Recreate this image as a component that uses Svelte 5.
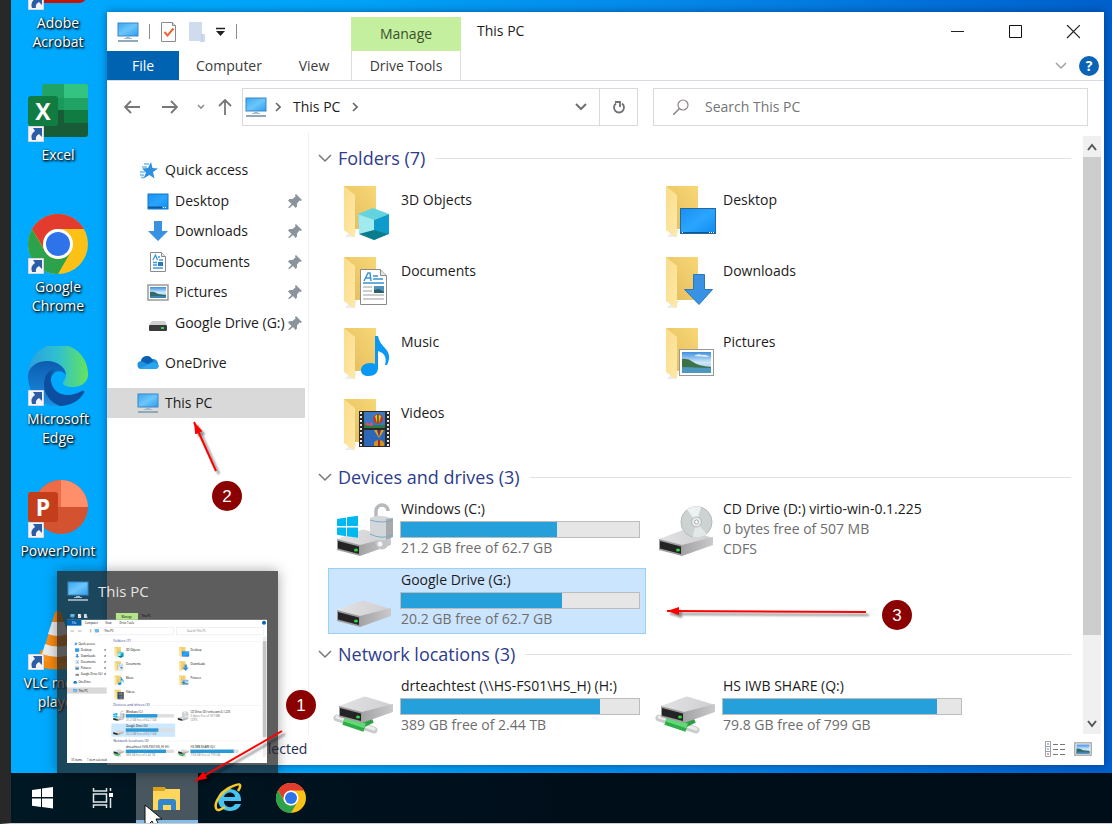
<svelte:head>
	<title>This PC</title>
</svelte:head>

<script>
	let search = '';

	const shortcuts = [
		{ label: 'Adobe Acrobat', icon: 'acrobat' },
		{ label: 'Excel', icon: 'excel', letter: 'X' },
		{ label: 'Google Chrome', icon: 'chrome' },
		{ label: 'Microsoft Edge', icon: 'edge' },
		{ label: 'PowerPoint', icon: 'powerpoint', letter: 'P' },
		{ label: 'VLC media player', icon: 'vlc' }
	];

	const quick = [
		{ label: 'Desktop', icon: 'desktop' },
		{ label: 'Downloads', icon: 'download' },
		{ label: 'Documents', icon: 'document' },
		{ label: 'Pictures', icon: 'picture' },
		{ label: 'Google Drive (G:)', icon: 'smalldrive' }
	];

	// top and line are the heading's place in the thumbnail
	const groups = [
		{
			title: 'Folders (7)',
			top: 126,
			line: 326,
			items: [
				{ name: '3D Objects', icon: 'f-objects' },
				{ name: 'Desktop', icon: 'f-desktop' },
				{ name: 'Documents', icon: 'f-documents' },
				{ name: 'Downloads', icon: 'f-downloads' },
				{ name: 'Music', icon: 'f-music' },
				{ name: 'Pictures', icon: 'f-pictures' },
				{ name: 'Videos', icon: 'f-videos' }
			]
		},
		{
			title: 'Devices and drives (3)',
			top: 445,
			line: 424,
			items: [
				{ name: 'Windows (C:)', icon: 'd-windows', used: 65.5, info: ['21.2 GB free of 62.7 GB'] },
				{ name: 'CD Drive (D:) virtio-win-0.1.225', icon: 'd-cd', info: ['0 bytes free of 507 MB', 'CDFS'] },
				{ name: 'Google Drive (G:)', icon: 'd-drive', used: 67.7, info: ['20.2 GB free of 62.7 GB'], selected: true }
			]
		},
		{
			title: 'Network locations (3)',
			top: 622,
			line: 420,
			items: [
				{ name: 'drteachtest (\\\\HS-FS01\\HS_H) (H:)', icon: 'd-network', used: 83.6, info: ['389 GB free of 2.44 TB'] },
				{ name: 'HS IWB SHARE (Q:)', icon: 'd-network', used: 90, info: ['79.8 GB free of 799 GB'] }
			]
		}
	];

	const taskbar = [
		{ label: 'Start', icon: 'start' },
		{ label: 'Task View', icon: 'taskview' },
		{ label: 'File Explorer', icon: 'explorer', active: true },
		{ label: 'Internet Explorer', icon: 'ie' },
		{ label: 'Google Chrome', icon: 'chrome' }
	];

	// position of a tile inside the thumbnail
	function tileX(i) {
		return 221 + (i % 2) * 322;
	}
	function tileY(top, i) {
		return top + 40 + Math.floor(i / 2) * 71;
	}
</script>

<svg class="sprite" aria-hidden="true">
	<defs>
		<linearGradient id="screen" x1="0" y1="0" x2="1" y2="1">
			<stop offset="0" stop-color="#3aa6f2" /><stop offset=".5" stop-color="#6cc6fb" /><stop offset="1" stop-color="#2f9df0" />
		</linearGradient>
		<linearGradient id="desk" x1="0" y1="0" x2="1" y2="1">
			<stop offset="0" stop-color="#1b8ff0" /><stop offset=".5" stop-color="#2aa5ff" /><stop offset="1" stop-color="#118cf0" />
		</linearGradient>
		<linearGradient id="flap" x1="0" y1="0" x2="1" y2="1">
			<stop offset="0" stop-color="#fbdc88" /><stop offset="1" stop-color="#fde9a9" />
		</linearGradient>
		<linearGradient id="back" x1="0" y1="1" x2="1" y2="0">
			<stop offset="0" stop-color="#e3bb5c" /><stop offset="1" stop-color="#f8d775" />
		</linearGradient>
		<linearGradient id="steel" x1="0" y1="0" x2="1" y2="0">
			<stop offset="0" stop-color="#e2e2e4" /><stop offset="1" stop-color="#cfcfd2" />
		</linearGradient>
		<linearGradient id="side" x1="0" y1="0" x2="1" y2="0">
			<stop offset="0" stop-color="#a3a3a6" /><stop offset="1" stop-color="#cacacd" />
		</linearGradient>
		<linearGradient id="arrowblue" x1="0" y1="0" x2="1" y2="1">
			<stop offset="0" stop-color="#3f90dd" /><stop offset="1" stop-color="#3294e8" />
		</linearGradient>
		<linearGradient id="sky" x1="0" y1="0" x2="0" y2="1">
			<stop offset="0" stop-color="#3f8ee0" /><stop offset=".5" stop-color="#cfe8f8" /><stop offset="1" stop-color="#7db6dc" />
		</linearGradient>
		<linearGradient id="edgetop" x1="0" y1="0" x2="1" y2="0">
			<stop offset="0" stop-color="#2a9fe0" /><stop offset=".5" stop-color="#2fc1cf" /><stop offset="1" stop-color="#66e35a" />
		</linearGradient>
		<linearGradient id="edgeleft" x1="0" y1="0" x2="0" y2="1">
			<stop offset="0" stop-color="#0d5cb0" /><stop offset="1" stop-color="#1c90e2" />
		</linearGradient>
		<linearGradient id="cone" x1="0" y1="0" x2="1" y2="0">
			<stop offset="0" stop-color="#ff9a1f" /><stop offset="1" stop-color="#e96a00" />
		</linearGradient>
	</defs>

	<symbol id="monitor" viewBox="0 0 22 20">
		<rect x="1" y="1" width="20" height="13" fill="url(#screen)" stroke="#3a86c4" />
		<path d="M9 15h4v1h2v1H7v-1h2z" fill="#a5bac9" />
		<rect x="1" y="18" width="20" height="2" fill="#8fa8ba" />
	</symbol>
	<symbol id="desktop" viewBox="0 0 22 20">
		<rect x="1" y="3" width="20" height="15" fill="url(#desk)" stroke="#1577c4" />
		<path d="M1 16.5h14" stroke="#0a5ba5" stroke-width="2" />
		<path d="M16 16.5h1m1 0h1" stroke="#fff" />
	</symbol>
	<symbol id="download" viewBox="0 0 22 20">
		<path d="M7 0h8v10h6L11 20 1 10h6z" fill="url(#arrowblue)" />
	</symbol>
	<symbol id="document" viewBox="0 0 22 20">
		<path d="M3.5.5h11l4 4v15h-15z" fill="#fff" stroke="#8b8b8b" />
		<path d="M14.5.5v4h4" fill="#e7e7e7" stroke="#8b8b8b" />
		<path d="M6 8l2.500-5 2 5M11 5h2M12 8h4M6 10.500h4M6 13h4M6 16h10" stroke="#3a9bdc" fill="none" stroke-width="1.300" />
		<rect x="11" y="10" width="5" height="4" fill="#2c78b8" />
	</symbol>
	<symbol id="picture" viewBox="0 0 22 20">
		<rect x="1" y="3" width="20" height="15" fill="#fff" stroke="#9a9a9a" stroke-width="1.500" />
		<rect x="3" y="5" width="16" height="11" fill="url(#sky)" />
		<path d="M3 10q4-1 8 2l8 1v3H3z" fill="#2f6a6a" />
		<path d="M3 14h16v2H3z" fill="#3f83b5" />
	</symbol>
	<symbol id="smalldrive" viewBox="0 0 22 20">
		<path d="M5 8h13l2 4H2z" fill="#cfcfcf" />
		<rect x="2" y="12" width="18" height="6" rx="1" fill="#3a3a3a" />
		<rect x="14" y="14" width="3" height="2" fill="#35d04a" />
	</symbol>
	<symbol id="star" viewBox="0 0 22 20">
		<path d="M14 2l1.500 6 5.500.5-5 3.500 1.500 6.500-5-3.500-6 3.500 2.500-6L5 8.500 11 8z" fill="#2e8fe0" />
		<path d="M7 4h5M5 7h5M3 12h5M3 15h4M4 17.500h3" stroke="#6db9ee" stroke-width="1.300" />
	</symbol>
	<symbol id="onedrive" viewBox="0 0 22 20">
		<path d="M5 16a4 4 0 0 1-1-8 6 6 0 0 1 11-2 5 5 0 0 1 6 5 3 3 0 0 1-2 5z" fill="#1e90e0" />
		<path d="M4 8a6 6 0 0 1 11-2q1 1 1.500 2L11 11z" fill="#0a5fb4" />
		<path d="M3 15l13-5.500q5 0 5 3a3 3 0 0 1-2 3.500H5z" fill="#2aa6ee" />
	</symbol>
	<symbol id="pin" viewBox="0 0 14 14">
		<path d="M8 0l6 6-1.500 1-1-.5-2.500 3v3L7.500 14 5 11 1.500 14 0 13.500 3.500 10 0 6.500 1.500 5h3l3-2.500L7 1z" fill="#8b949c" />
	</symbol>
	<symbol id="check" viewBox="0 0 18 20">
		<path d="M1.500.5h11l3 3v16h-14z" fill="#fdfdfd" stroke="#8a8a8a" />
		<path d="M12.500.5v3h3" fill="#ddd" stroke="#8a8a8a" />
		<path d="M4.500 10l3 3.500 6-7" fill="none" stroke="#e8663a" stroke-width="2" />
	</symbol>
	<symbol id="blank" viewBox="0 0 18 20">
		<path d="M1 0h13v12h3v8h-5v-1H1z" fill="#cfdcee" />
		<path d="M14 12v8" stroke="#b9cae3" />
	</symbol>

	<symbol id="folder" viewBox="0 0 64 64">
		<path d="M13 59l6-7h6l-3 7z" fill="#ececec" />
		<path d="M12 8h32v43H22z" fill="url(#back)" />
		<path d="M12 8l11 9v42l-3-1-8-6z" fill="url(#flap)" />
	</symbol>
	<symbol id="f-objects" viewBox="0 0 64 64">
		<use href="#folder" />
		<path d="M26 36l15-6 16 6-15 6z" fill="#63d3df" />
		<path d="M26 36l16 6v20l-15-6z" fill="#7fe0ea" />
		<path d="M57 36l-15 6v20l15-6z" fill="#0d9ccb" />
		<path d="M42 42v10l-15 4V37z" fill="#b5f0f4" opacity=".6" />
		<path d="M27 56l15-4 14 4-14 6z" fill="#0b7c8c" />
	</symbol>
	<symbol id="f-desktop" viewBox="0 0 64 64">
		<use href="#folder" />
		<rect x="26.500" y="30.500" width="35" height="25" fill="url(#desk)" stroke="#226a9c" />
		<path d="M27 54.500h34" stroke="#0f5790" />
		<path d="M28 54.500h1M55 54.500h1m1 0h1m1 0h1" stroke="#fff" />
	</symbol>
	<symbol id="f-documents" viewBox="0 0 64 64">
		<use href="#folder" />
		<path d="M28.500 20.500h20l6 6v29h-26z" fill="#fff" stroke="#8a8a8a" />
		<path d="M48.500 20.500v6h6" fill="#e4e4e4" stroke="#8a8a8a" />
		<path d="M32 32l4-8h2l1 8M34 29h4M41 27h5M41 30h10M31 34h21" fill="none" stroke="#3a93d2" stroke-width="1.500" />
		<path d="M31 38h9M31 42h9M31 46h21M31 50h21" stroke="#9b9b9b" />
		<rect x="42" y="37" width="10" height="7" fill="#4f93bd" />
		<path d="M42 41l5-1 5 3v1H42z" fill="#2c5f63" />
	</symbol>
	<symbol id="f-downloads" viewBox="0 0 64 64">
		<use href="#folder" />
		<path d="M39.500 25.500h11v15h8L45 55.500 30.500 40.500h9z" fill="url(#arrowblue)" stroke="#2a79bd" />
	</symbol>
	<symbol id="f-music" viewBox="0 0 64 64">
		<use href="#folder" />
		<path d="M43 16h3q1 6 6 11c5 5 7 10 3 18h-2c2-7 0-12-7-14v17c0 5-4 8-9 8s-8-2-8-6 4-7 9-7q3 0 5 1z" fill="#0a98f5" />
	</symbol>
	<symbol id="f-pictures" viewBox="0 0 64 64">
		<use href="#folder" />
		<rect x="25.500" y="29.500" width="34" height="26" fill="#fff" stroke="#999" />
		<rect x="28" y="32" width="29" height="21" fill="url(#sky)" />
		<path d="M28 39q6-1 11 3t18 5v2H28z" fill="#3d7148" />
		<path d="M28 47l29 1v5H28z" fill="#4e97bf" />
		<path d="M40 36q4-3 8-1 4-1 7 2z" fill="#fff" opacity=".8" />
	</symbol>
	<symbol id="f-videos" viewBox="0 0 64 64">
		<use href="#folder" />
		<rect x="27" y="20" width="31" height="36" fill="#292929" />
		<path d="M29 21v34M56 21v34" stroke="#e9e9e9" stroke-width="2" stroke-dasharray="2 2" />
		<rect x="32" y="21" width="21" height="16" fill="#3a78c4" />
		<rect x="32" y="39" width="21" height="16" fill="#2d67ba" />
		<path d="M32 33q3-2 6 0 4 2 15 1v3H32z" fill="#2d7a42" />
		<circle cx="46" cy="28" r="5" fill="#c9362c" />
		<path d="M43 25q3-3 6 0l-2 7h-2z" fill="#efc326" />
		<path d="M46 23v9" stroke="#2d5a2d" stroke-width="1.500" />
		<path d="M33 34l2-3 2 2 3-2 1 4z" fill="#d8517a" />
		<path d="M42 39h10l-3 5-2 3-2-3z" fill="#d9a51c" />
		<path d="M45 39h4l-2 7z" fill="#6f2b67" />
		<path d="M42 55q-1-6 5-6t5 6z" fill="#d98f1c" />
		<path d="M46 49h2v6h-2z" fill="#9c2c2c" />
	</symbol>

	<symbol id="d-drive" viewBox="0 0 64 64">
		<path d="M5 42l24-9q2-1 4 0l26 8-31 8z" fill="url(#steel)" />
		<path d="M28 48l31-8v8L28 59z" fill="url(#side)" />
		<path d="M5 42l23 6v11L5 53z" fill="#9d9da0" />
		<path d="M6 44l21 5.500v7.500L6 51.500z" fill="#242424" />
		<ellipse cx="24" cy="53" rx="2" ry="1.500" fill="#2fd34a" />
	</symbol>
	<symbol id="d-windows" viewBox="0 0 64 64">
		<use href="#d-drive" />
		<path d="M5 22l9-1.500V29H5zM15 20.300l11-1.600V29H15zM5 30.500h9v8.700l-9-1.400zM15 30.500h11v10.200l-11-1.500z" fill="#00b9f2" />
		<circle cx="50" cy="46" r="6.500" fill="#c2c5c8" />
		<path d="M44 20v-6a6 6 0 0 1 12 0" fill="none" stroke="#b7babd" stroke-width="3.500" />
		<path d="M38 21q10-5 23 1v18q-11 7-23 0z" fill="#d4d7da" />
		<path d="M54 22l7-1v19l-7 3z" fill="#a6a9ae" />
		<path d="M38 23q12 4 23 0M38 37q12 6 23 1" fill="none" stroke="#7aaac8" />
		<circle cx="48" cy="47" r="2.500" fill="#f4f4f4" />
	</symbol>
	<symbol id="d-cd" viewBox="0 0 64 64">
		<use href="#d-drive" />
		<circle cx="42.500" cy="25" r="15.500" fill="#cdd3d3" stroke="#b5baba" />
		<path d="M42.500 25L33 12.500a15.500 15.500 0 0 1 14-2.500z" fill="#eef1f1" />
		<path d="M42.500 25l10 12a15.500 15.500 0 0 1-14 3z" fill="#e3e7e7" />
		<circle cx="42.500" cy="25" r="5" fill="#e8ebeb" stroke="#b3b8b8" />
		<circle cx="42.500" cy="25" r="2" fill="#fff" stroke="#aaa" />
	</symbol>
	<symbol id="d-network" viewBox="0 0 64 64">
		<path d="M5 44L42 56" stroke="#c9cbcc" stroke-width="7" stroke-linecap="round" />
		<path d="M5 43L42 55" stroke="#eceeee" stroke-width="3" stroke-linecap="round" />
		<path d="M30 50l10-5" stroke="#2e9d45" stroke-width="8" />
		<path d="M12 46l21 7" stroke="#2eae48" stroke-width="10" />
		<path d="M12 45l21 7" stroke="#62d874" stroke-width="5" />
		<g transform="translate(2 -10)"><use href="#d-drive" /></g>
	</symbol>

	<symbol id="acrobat" viewBox="0 0 60 60">
		<rect x="1" y="0" width="58" height="53" rx="8" fill="#c41408" />
	</symbol>
	<symbol id="excel" viewBox="0 0 60 60">
		<path d="M17 2h41a2 2 0 0 1 2 2v12H14V5a3 3 0 0 1 3-3z" fill="#21a366" />
		<path d="M36 2h22a2 2 0 0 1 2 2v12H36z" fill="#33c481" />
		<path d="M14 16h46v12H14z" fill="#21a366" />
		<path d="M14 16h22v12H14z" fill="#189a5b" />
		<path d="M14 28h46v13H14z" fill="#107c41" />
		<path d="M14 28h22v13h24v11a3 3 0 0 1-3 3H17a3 3 0 0 1-3-3z" fill="#185c37" />
		<rect x="0" y="14" width="30" height="30" rx="3" fill="#107c41" />
	</symbol>
	<symbol id="chrome" viewBox="0 0 60 60">
		<circle cx="30" cy="30" r="30" fill="#fbc116" />
		<path d="M4 15a30 30 0 0 1 52 0H30a15 15 0 0 0-14 20z" fill="#e33b2e" />
		<path d="M4 15a30 30 0 0 0 26 45l13-22.500a15 15 0 0 1-26 0z" fill="#2da24c" />
		<circle cx="30" cy="30" r="15" fill="#fff" />
		<circle cx="30" cy="30" r="12" fill="#2f73ea" />
	</symbol>
	<symbol id="edge" viewBox="0 0 60 60">
		<path d="M0 29A30 30 0 0 1 60 27c1 8-6 14-15 14-7 0-10-2-10-4s3-3 3-8c0-7-8-13-18-13C10 16 3 21 0 29z" fill="url(#edgetop)" />
		<path d="M0 30c0-9 9-15 19-15 11 0 19 7 19 14-4-6-13-5-15 4-2 13 7 22 16 24-3 2-6 3-10 3C13 60 0 48 0 30z" fill="url(#edgeleft)" />
		<path d="M16 39c0-8 3-14 11-16-6 5-5 15 0 21 6 6 16 7 27 1 1-1 3 0 2 2-5 8-14 13-24 13-9-3-16-12-16-21z" fill="#0c4fa0" />
	</symbol>
	<symbol id="powerpoint" viewBox="0 0 60 60">
		<circle cx="33" cy="29" r="27" fill="#d35230" />
		<path d="M33 2a27 27 0 0 1 27 27H33z" fill="#ff8f6b" />
		<path d="M33 2v27H6A27 27 0 0 1 33 2z" fill="#ed6c47" />
		<rect x="0" y="14" width="30" height="30" rx="3" fill="#c43e1c" />
	</symbol>
	<symbol id="vlc" viewBox="0 0 60 60">
		<path d="M13 40h34l6 16q-23 7-46 0z" fill="#f58a0c" />
		<path d="M27 2q3-2 6 0l14 47q-17 8-34 0z" fill="url(#cone)" />
		<path d="M24 12h12l4 12q-10 4-20 0zM17 34q13 5 26 0l3 10q-16 6-32 0z" fill="#ececec" />
	</symbol>
	<symbol id="link" viewBox="0 0 16 16">
		<rect width="16" height="16" fill="#f4f4f6" stroke="#b5bcc8" />
		<path d="M5 2h9v9l-3-3q-4 2-3 6H4Q2 8 7 5z" fill="#2b5ca6" />
	</symbol>

	<symbol id="start" viewBox="0 0 30 30">
		<path d="M4 7l9-1.200V14H4zM14 5.600L25 4v10H14zM4 15.500h9V24l-9-1.200zM14 15.500h11v10L14 24z" fill="#fff" />
	</symbol>
	<symbol id="taskview" viewBox="0 0 30 30">
		<path d="M3.500 5v3h13V5M3.500 25v-3h13v3M3.500 11h13v8h-13zM20.500 5v3M20.500 15v10" fill="none" stroke="#dfe5e8" stroke-width="1.500" />
		<rect x="19" y="10" width="4" height="4" fill="#fff" />
	</symbol>
	<symbol id="explorer" viewBox="0 0 30 30">
		<path d="M1 4h11l2 2h14v21H1z" fill="#ffd65c" />
		<path d="M1 4h11l2 2-2 2H1z" fill="#dba11d" />
		<path d="M6 27V19a3 3 0 0 1 3-3h12a3 3 0 0 1 3 3v8h-5v-5h-8v5z" fill="#2f86cf" />
	</symbol>
	<symbol id="ie" viewBox="0 0 30 30">
		<path d="M27 18H10c0 7 9 8 11 3h6C24 31 4 31 4 16 4 3 28 2 27 18zM10 14h11c0-6-10-6-11 0z" fill="#49c4f2" />
		<path d="M24 8c5-8 1-8-7-4C8 8 0 19 2 25c1 4 6 1 9-1" fill="none" stroke="#f6c928" stroke-width="2.500" />
	</symbol>
</svg>

<div class="screen">
	<div class="workspace">
		<div class="icons">
			{#each shortcuts as s}
				<a class="shortcut" href="#{s.icon}">
					<span class="art">
						<svg width="60" height="60"><use href="#{s.icon}" /></svg>
						{#if s.letter}
							<b class="letter">{s.letter}</b>
						{/if}
						<svg class="link" width="16" height="16"><use href="#link" /></svg>
					</span>
					<span class="caption">{s.label}</span>
				</a>
			{/each}
		</div>

		<main class="window">
			<header class="titlebar">
				<div class="quickbar">
					<svg width="22" height="20"><use href="#monitor" /></svg>
					<i class="sep"></i>
					<svg width="18" height="20"><use href="#check" /></svg>
					<svg width="18" height="20"><use href="#blank" /></svg>
					<svg width="10" height="10" viewBox="0 0 10 10"><path d="M0 1.500h9" stroke="#222" stroke-width="1.500" /><path d="M0 4h9L4.500 9z" fill="#222" /></svg>
					<i class="sep"></i>
				</div>
				<div class="manage">Manage</div>
				<h1>This PC</h1>
				<div class="controls">
					<button aria-label="Minimize"><svg width="14" height="14"><path d="M1 6.500h13" stroke="#222" /></svg></button>
					<button aria-label="Maximize"><svg width="14" height="14"><path d="M1.500.5h12v12h-12z" fill="none" stroke="#111" /></svg></button>
					<button aria-label="Close"><svg width="14" height="14"><path d="M1 0l13 13M14 0L1 13" stroke="#222" stroke-width="1.200" /></svg></button>
				</div>
			</header>

			<nav class="ribbon">
				<button class="file">File</button>
				<button class="computer">Computer</button>
				<button class="view">View</button>
				<button class="tools">Drive Tools</button>
				<div class="ribbon-end">
					<button aria-label="Expand the ribbon"><svg width="12" height="8"><path d="M1 1l5 5 5-5" fill="none" stroke="#a2a2a6" stroke-width="1.500" /></svg></button>
					<button class="help" aria-label="Help">?</button>
				</div>
			</nav>

			<div class="navrow">
				<div class="arrows">
					<button aria-label="Back"><svg width="16" height="16"><path d="M1 8h15M7 2L1 8l6 6" fill="none" stroke="#77777a" stroke-width="1.800" /></svg></button>
					<button aria-label="Forward"><svg width="16" height="16"><path d="M0 8h15M9 2l6 6-6 6" fill="none" stroke="#77777a" stroke-width="1.800" /></svg></button>
					<button class="small" aria-label="Recent locations"><svg width="8" height="6"><path d="M1 1l3 3 3-3" fill="none" stroke="#909094" stroke-width="1.600" /></svg></button>
					<button class="small" aria-label="Up"><svg width="16" height="16"><path d="M8 16V1M2 7l6-6 6 6" fill="none" stroke="#77777a" stroke-width="1.800" /></svg></button>
				</div>
				<div class="address">
					<svg width="22" height="20"><use href="#monitor" /></svg>
					<svg class="crumb" width="6" height="10"><path d="M1 1l4 4-4 4" fill="none" stroke="#666" stroke-width="1.600" /></svg>
					<span>This PC</span>
					<svg class="crumb" width="6" height="10"><path d="M1 1l4 4-4 4" fill="none" stroke="#666" stroke-width="1.600" /></svg>
					<button class="history" aria-label="Previous locations"><svg width="12" height="8"><path d="M1 1l5 5 5-5" fill="none" stroke="#707074" stroke-width="2" /></svg></button>
					<button class="refresh" aria-label="Refresh"><svg width="14" height="14"><path d="M4 3.500a5 5 0 1 0 6 0" fill="none" stroke="#707074" stroke-width="1.800" /><path d="M3 2h5v5" fill="none" stroke="#707074" stroke-width="1.800" /></svg></button>
				</div>
				<label class="search">
					<svg width="16" height="16"><circle cx="10" cy="6" r="5" fill="none" stroke="#8c8484" stroke-width="1.200" /><path d="M6.500 9.500L0 16" stroke="#8c8484" stroke-width="1.500" /></svg>
					<input type="text" aria-label="Search This PC" placeholder="Search This PC" bind:value={search} />
				</label>
			</div>

			<div class="body">
				<aside>
					<div class="quick">
						<a href="#quick"><svg width="22" height="20"><use href="#star" /></svg><span>Quick access</span></a>
						{#each quick as q}
							<a class="child" href="#{q.icon}">
								<svg width="22" height="20"><use href="#{q.icon}" /></svg>
								<span>{q.label}</span>
								<svg class="pin" width="14" height="14"><use href="#pin" /></svg>
							</a>
						{/each}
					</div>
					<a href="#onedrive"><svg width="22" height="20"><use href="#onedrive" /></svg><span>OneDrive</span></a>
					<a class="current" href="#pc"><svg width="22" height="20"><use href="#monitor" /></svg><span>This PC</span></a>
				</aside>

				<div class="content">
					{#each groups as g}
						<section>
							<h2>
								<svg width="14" height="9"><path d="M1 1l6 6 6-6" fill="none" stroke="#77777c" stroke-width="1.500" /></svg>
								{g.title}
							</h2>
							<div class="tiles">
								{#each g.items as item}
									<div class="tile" class:selected={item.selected} class:plain={!item.info}>
										<svg width="64" height="64"><use href="#{item.icon}" /></svg>
										<div class="text">
											<p>{item.name}</p>
											{#if item.used}
												<div class="bar"><div class="fill" style="width: {item.used}%"></div></div>
											{/if}
											{#each item.info || [] as line}
												<p class="info">{line}</p>
											{/each}
										</div>
									</div>
								{/each}
							</div>
						</section>
					{/each}
				</div>

				<div class="scroll">
					<button aria-label="Scroll up"><svg width="10" height="8"><path d="M1 7l4-5 4 5" fill="none" stroke="#555" stroke-width="2" /></svg></button>
					<div class="track"><div class="thumb"></div></div>
					<button aria-label="Scroll down"><svg width="10" height="8"><path d="M1 1l4 5 4-5" fill="none" stroke="#555" stroke-width="2" /></svg></button>
				</div>
			</div>

			<footer>
				<span>10 items</span>
				<span>1 item selected</span>
				<div class="views">
					<button aria-label="Details view"><svg width="22" height="18"><path d="M1.500 1.500h5v15h-5zM1 6.500h5M1 11.500h5" fill="none" stroke="#a0a0a4" /><path d="M3 4h2M3 9h2" stroke="#3d8fd0" /><path d="M3 14h2" stroke="#d03d3d" /><path d="M9 4.500h5M16 4.500h5M9 9.500h5M16 9.500h5M9 14.500h5M16 14.500h5" stroke="#77777c" /></svg></button>
					<button aria-label="Large icons view"><svg width="18" height="16" viewBox="0 2 22 17"><use href="#picture" width="22" height="20" /></svg></button>
				</div>
			</footer>
		</main>

		<div class="preview">
			<div class="preview-title">
				<svg width="22" height="20"><use href="#monitor" /></svg>
				<span>This PC</span>
			</div>
			<svg class="mini" viewBox="0 0 997 753" aria-hidden="true">
				<use href="#monitor" x="5" y="9" width="44" height="22" />
				<use href="#check" x="52" y="9" width="22" height="22" />
				<use href="#blank" x="82" y="9" width="22" height="22" />
				<rect x="0" y="39" width="997" height="714" fill="#fff" />
				<rect x="0" y="39" width="72" height="29" fill="#0063b1" />
				<rect x="244" y="5" width="110" height="34" fill="#b4e58d" />
				<text x="272" y="28">Manage</text>
				<text x="370" y="26">This PC</text>
				<text x="25" y="60" fill="#fff">File</text>
				<text x="89" y="60">Computer</text>
				<text x="191" y="60">View</text>
				<text x="262" y="60">Drive Tools</text>
				<circle cx="982" cy="53" r="10" fill="#0b63b5" />
				<rect x="135" y="76" width="396" height="38" fill="none" stroke="#dcdce0" stroke-width="2" />
				<rect x="546" y="76" width="434" height="38" fill="none" stroke="#dcdce0" stroke-width="2" />
				<path d="M18 95h16M56 95h16M118 102V86" stroke="#777" stroke-width="3" />
				<use href="#monitor" x="138" y="85" width="22" height="20" />
				<text x="186" y="99">This PC</text>
				<text x="598" y="99" fill="#777">Search This PC</text>
				<rect x="976" y="122" width="18" height="600" fill="#eee" />
				<rect x="976" y="145" width="18" height="478" fill="#c4c4c4" />
				<rect x="0" y="376" width="198" height="31" fill="#d9d9d9" />
				<use href="#star" x="32" y="148" width="22" height="20" />
				<text x="57" y="163">Quick access</text>
				{#each quick as q, i}
					<use href="#{q.icon}" x="40" y={179 + i * 30} width="22" height="20" />
					<text x="68" y={194 + i * 30}>{q.label}</text>
					<use href="#pin" x="183" y={182 + i * 30} width="14" height="14" />
				{/each}
				<use href="#onedrive" x="30" y="341" width="22" height="20" />
				<text x="57" y="356">OneDrive</text>
				<use href="#monitor" x="30" y="382" width="22" height="20" />
				<text x="57" y="397">This PC</text>
				{#each groups as g}
					<text class="head" x="230" y={g.top + 26}>{g.title}</text>
					<path d="M{g.line} {g.top + 21}H964" stroke="#e6e6ea" stroke-width="2" />
					{#each g.items as item, i}
						{#if item.selected}
							<rect x={tileX(i)} y={tileY(g.top, i)} width="318" height="66" fill="#cce8ff" />
						{/if}
						<use href="#{item.icon}" x={tileX(i) + 4} y={tileY(g.top, i)} width="64" height="64" />
						<text x={tileX(i) + 73} y={tileY(g.top, i) + (item.info ? 17 : 26)}>{item.name}</text>
						{#if item.used}
							<rect x={tileX(i) + 72} y={tileY(g.top, i) + 24} width="240" height="17" fill="#dedede" />
							<rect x={tileX(i) + 72} y={tileY(g.top, i) + 24} width={item.used * 2.4} height="17" fill="#2699d6" />
						{/if}
						{#each item.info || [] as line, l}
							<text x={tileX(i) + 73} y={tileY(g.top, i) + (item.used ? 57 : 37 + l * 20)} fill="#777">{line}</text>
						{/each}
					{/each}
				{/each}
				<text x="20" y="742">10 items</text>
				<text x="100" y="742">1 item selected</text>
			</svg>
		</div>
	</div>

	<nav class="taskbar">
		{#each taskbar as t}
			<button class:active={t.active} aria-label={t.label}><svg width="30" height="30"><use href="#{t.icon}" /></svg></button>
		{/each}
	</nav>

	<!-- numbered steps drawn over the desktop -->
	<svg class="notes">
		<defs>
			<marker id="head" viewBox="0 0 12 8" refX="12" refY="4" markerWidth="12" markerHeight="8" markerUnits="userSpaceOnUse" orient="auto">
				<path d="M0 0l12 4-12 4z" fill="#fe0000" />
			</marker>
		</defs>
		<g class="lines">
			<path d="M282 731L195 781" />
			<path d="M216 471L194 422" />
			<path d="M866 612L667 611" />
		</g>
		<circle cx="301" cy="705" r="15" /><text x="301" y="711">1</text>
		<circle cx="227" cy="496" r="15" /><text x="227" y="502">2</text>
		<circle cx="897" cy="615" r="15" /><text x="897" y="621">3</text>
		<path d="M145 805v19h4l3-3 2 4h5l-3-6h6z" fill="#fff" stroke="#111" />
	</svg>
</div>

<style>
:global(body) {
	margin: 0;
	background: #282828;
}

.sprite {
	position: absolute;
	width: 0;
	height: 0;
}

.screen {
	position: relative;
	display: flex;
	flex-direction: column;
	box-sizing: border-box;
	height: 100vh;
	overflow: hidden;
	border-left: 11px solid #282828;
	border-bottom: 1px solid #c9ccd0;
	font-family: 'Open Sans', 'Noto Sans', sans-serif;
	font-size: 14px;
	line-height: 20px;
	color: #1c1c1c;
}

.workspace {
	position: relative;
	flex: 1;
	min-height: 0;
	background: linear-gradient(90deg, #00aaff 0, #00a4f8 30%, #0588ea 60%, #0060cc 100%);
}

svg {
	display: block;
	flex: none;
}

button {
	display: flex;
	align-items: center;
	justify-content: center;
	padding: 0;
	border: 0;
	background: none;
	font: inherit;
	color: inherit;
}

a {
	color: inherit;
	text-decoration: none;
}

h1, h2, p {
	margin: 0;
	font-size: 14px;
	font-weight: 400;
}

.icons {
	width: 94px;
	margin-top: -50px;
}

.shortcut {
	display: flex;
	flex-direction: column;
	align-items: center;
	gap: 3px;
	height: 132px;
	color: #fff;
	line-height: 19px;
	text-align: center;
	text-shadow: 1px 1px 2px #000, 1px 1px 3px #000;
}

.art {
	position: relative;
}

.letter {
	position: absolute;
	top: 14px;
	left: 0;
	width: 30px;
	font-size: 23px;
	line-height: 30px;
	text-shadow: none;
}

.link {
	position: absolute;
	left: 0;
	bottom: 0;
}

.caption {
	width: 84px;
}

.window {
	position: absolute;
	top: 12px;
	right: 8px;
	bottom: 8px;
	left: 96px;
	display: flex;
	flex-direction: column;
	background: #fff;
	box-shadow: 0 0 8px rgba(0, 30, 80, .5);
}

.titlebar {
	display: flex;
	height: 39px;
}

.quickbar {
	display: flex;
	align-items: center;
	gap: 10px;
	box-sizing: border-box;
	width: 244px;
	padding-left: 10px;
}

.sep {
	width: 1px;
	height: 15px;
	background: #8c8c8c;
}

.manage {
	align-self: flex-end;
	width: 110px;
	height: 34px;
	background: #c3ef9e;
	line-height: 34px;
	text-align: center;
	color: #3b5030;
}

h1 {
	padding-left: 16px;
	line-height: 38px;
}

.controls {
	display: flex;
	margin-left: auto;
	padding-right: 2px;
}

.controls button {
	width: 58px;
}

.ribbon {
	display: flex;
	height: 29px;
	border-bottom: 1px solid #dadbe2;
	color: #3c3c3c;
}

.file {
	width: 72px;
	background: #0063b1;
	color: #fff;
}

.computer {
	width: 100px;
}

.view {
	width: 70px;
	margin-right: 2px;
}

.tools {
	box-sizing: border-box;
	width: 110px;
	border: solid #dcdce2;
	border-width: 0 1px;
}

.ribbon-end {
	display: flex;
	align-items: center;
	gap: 12px;
	margin-left: auto;
	padding-right: 5px;
}

.help {
	width: 20px;
	height: 20px;
	border-radius: 50%;
	background: #0b63b5;
	color: #fff;
	font-weight: 700;
}

.navrow {
	display: grid;
	grid-template-columns: 135px 396fr 450fr;
	padding: 7px 16px 7px 0;
}

.arrows {
	display: flex;
	align-items: center;
	padding-left: 6px;
}

.arrows button {
	width: 38px;
}

.arrows .small {
	width: 24px;
}

.address {
	display: flex;
	align-items: center;
	height: 36px;
	padding-left: 2px;
	border: 1px solid #d9d9dd;
}

.crumb {
	margin: 0 12px 0 8px;
}

.address span + .crumb {
	margin-left: 12px;
}

.history {
	margin-left: auto;
	width: 36px;
}

.refresh {
	width: 38px;
	height: 36px;
	border-left: 1px solid #d9d9dd;
}

.search {
	display: flex;
	align-items: center;
	gap: 16px;
	margin-left: 15px;
	padding-left: 19px;
	border: 1px solid #d9d9dd;
}

.search input {
	flex: 1;
	min-width: 0;
	padding: 0;
	border: 0;
	outline: 0;
	background: none;
	font: inherit;
}

.search input::placeholder {
	color: #757575;
}

.body {
	display: flex;
	flex: 1;
	min-height: 0;
	padding-right: 3px;
}

aside {
	display: flex;
	flex-direction: column;
	gap: 10px;
	box-sizing: border-box;
	width: 202px;
	padding: 22px 3px 0 0;
	border-right: 1px solid #f0f0f4;
}

aside a {
	display: flex;
	align-items: center;
	gap: 6px;
	height: 30px;
	padding-left: 30px;
	white-space: nowrap;
}

.quick {
	display: grid;
	grid-template-rows: repeat(6, 1fr);
	height: 183px;
}

.quick a {
	height: auto;
}

aside .child {
	padding-left: 40px;
}

.child span {
	flex: 1;
	min-width: 0;
	overflow: hidden;
}

.child .pin {
	margin: 0 4px 0 -3px;
}

.current {
	background: #d9d9d9;
}

.content {
	flex: 1;
	min-width: 0;
	overflow: hidden;
	padding: 5px 12px 0 9px;
}

h2 {
	display: flex;
	align-items: center;
	gap: 6px;
	height: 40px;
	color: #2d3c8c;
	font-size: 18px;
}

h2::after {
	content: '';
	flex: 1;
	height: 1px;
	margin-left: 4px;
	background: #e2e2e6;
}

.tiles {
	display: grid;
	grid-template-columns: repeat(auto-fill, 318px);
	gap: 5px 4px;
	padding-left: 10px;
}

.tile {
	display: flex;
	box-sizing: border-box;
	height: 66px;
	padding-left: 4px;
	gap: 4px;
}

.selected {
	background: #cce5ff;
	box-shadow: inset 0 0 0 1px #99d1f8;
}

.text {
	width: 240px;
	padding-top: 2px;
	white-space: nowrap;
}

.plain .text {
	padding-top: 12px;
}

.text p {
	padding-left: 1px;
}

.info {
	color: #6d6d6d;
}

.bar {
	box-sizing: border-box;
	height: 17px;
	margin-top: 2px;
	border: 1px solid #bcbcbc;
	background: #e6e6e6;
}

.fill {
	height: 100%;
	background: #26a0da;
}

.scroll {
	display: flex;
	flex-direction: column;
	width: 18px;
	margin-top: 3px;
	background: #f0f0f0;
}

.scroll button {
	height: 21px;
}

.track {
	flex: 1;
}

.thumb {
	height: 86%;
	background: #cdcdcd;
}

footer {
	display: flex;
	align-items: center;
	gap: 26px;
	height: 31px;
	padding: 0 12px 2px 20px;
	box-sizing: border-box;
	color: #1f2f52;
}

.views {
	display: flex;
	gap: 8px;
	margin-left: auto;
}

.preview {
	position: absolute;
	left: 46px;
	bottom: 0;
	box-sizing: border-box;
	width: 221px;
	padding: 0 11px 10px 10px;
	background: rgba(36, 36, 36, .74);
	box-shadow: 0 0 12px rgba(0, 0, 0, .35);
}

.preview-title {
	display: flex;
	align-items: center;
	gap: 9px;
	height: 41px;
	color: #e4e4e4;
	font-size: 15px;
}

.mini {
	width: 200px;
	font-size: 14px;
}

.mini .head {
	font-size: 18px;
	fill: #2d3c8c;
}

.taskbar {
	display: flex;
	height: 50px;
	padding-left: 1px;
	background: linear-gradient(90deg, #001823, #000e1a 50%);
}

.taskbar button {
	width: 62px;
}

.taskbar .active {
	background: #47565f;
	box-shadow: inset 0 -3px #86bde8;
}

.notes {
	position: absolute;
	top: 0;
	left: -11px;
	width: calc(100% + 11px);
	height: 100%;
	pointer-events: none;
}

.lines {
	fill: none;
	stroke: #fe0000;
	stroke-width: 2;
	filter: drop-shadow(3px 3px 1px rgba(0, 0, 0, .45));
}

.lines path {
	marker-end: url(#head);
}

.notes circle {
	fill: #8b0000;
}

.notes text {
	fill: #fff;
	font-family: 'Liberation Sans', sans-serif;
	font-size: 17px;
	text-anchor: middle;
}
</style>
